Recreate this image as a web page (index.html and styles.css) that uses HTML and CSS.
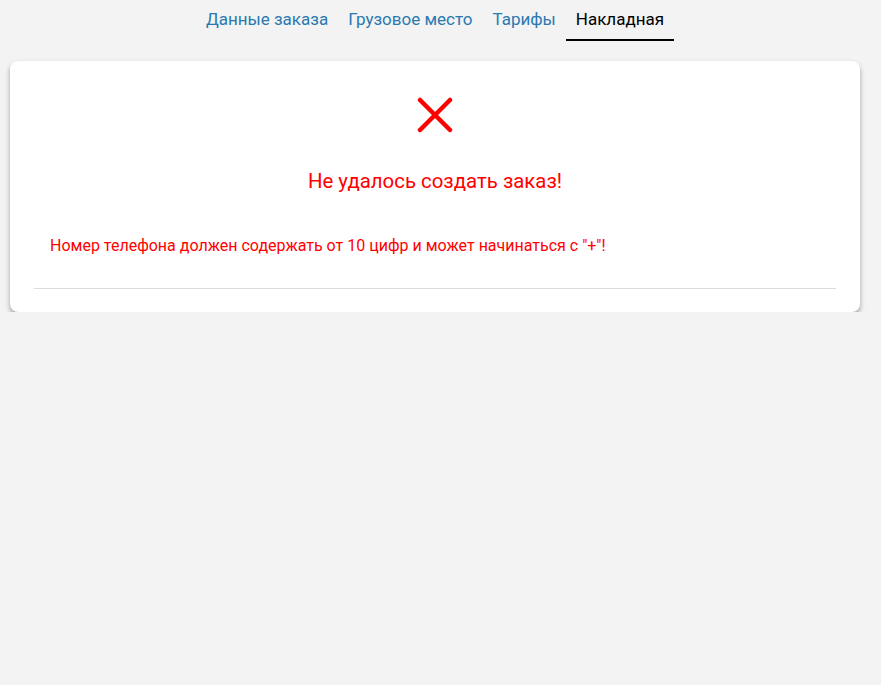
FILE: index.html
```html
<!DOCTYPE html>
<html lang="ru">
<head>
<meta charset="utf-8">
<link rel="stylesheet" href="styles.css">
</head>
<body>
<div class="page">
  <nav class="tabs">
    <a class="tab">Данные заказа</a>
    <a class="tab">Грузовое место</a>
    <a class="tab">Тарифы</a>
    <a class="tab active">Накладная</a>
  </nav>
  <section class="card">
    <div class="icon">
      <svg width="36" height="36" viewBox="0 0 36 36"><path d="M3 3 L33 33 M33 3 L3 33" stroke="#ff0000" stroke-width="4.5" stroke-linecap="round"/></svg>
    </div>
    <h2 class="title">Не удалось создать заказ!</h2>
    <p class="message">Номер телефона должен содержать от 10 цифр и может начинаться с "+"!</p>
    <hr class="divider">
  </section>
</div>
</body>
</html>
```
FILE: styles.css
```css
html, body {
  margin: 0;
  padding: 0;
  background: #f3f3f3;
  font-family: Roboto, "Liberation Sans", sans-serif;
}
.page {
  width: 850px;
  margin-left: 10px;
}
.tabs {
  display: flex;
  justify-content: center;
  height: 41px;
}
.tab {
  padding: 8px 10px 0;
  font-size: 17px;
  line-height: 22px;
  color: #2a79b0;
  box-sizing: border-box;
  height: 41px;
  border-bottom: 2px solid transparent;
}
.tab.active {
  color: #000;
  border-bottom-color: #000;
}
.card {
  margin-top: 20px;
  background: #fff;
  border-radius: 8px;
  box-shadow: 0 3px 5px rgba(0,0,0,0.35);
  padding: 36px 24px 23px;
}
.icon {
  display: flex;
  justify-content: center;
}
.icon svg {
  display: block;
}
.title {
  margin: 34px 0 0;
  text-align: center;
  font-weight: 400;
  font-size: 20.4px;
  line-height: 28px;
  color: #ff0000;
}
.message {
  margin: 41px 0 0;
  padding-left: 16px;
  font-size: 16px;
  line-height: 20px;
  color: #ff0000;
}
.divider {
  margin: 32px 0 0;
  border: 0;
  border-top: 1px solid #dcdcdc;
}
```
